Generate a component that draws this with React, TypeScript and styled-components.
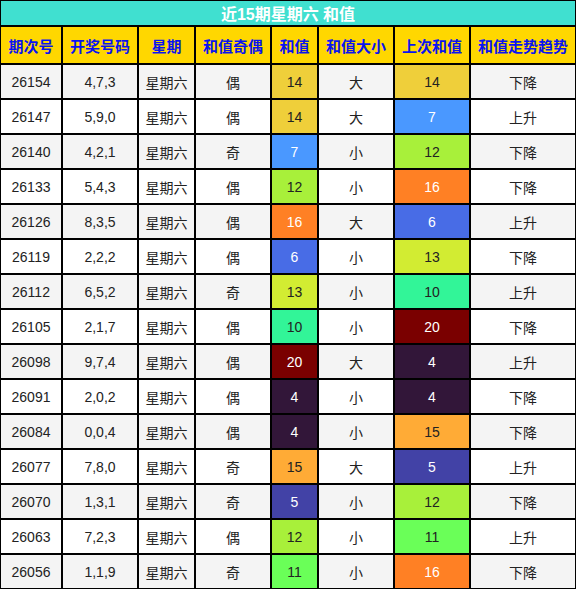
import React from 'react'
import styled, { createGlobalStyle } from 'styled-components'

const GlobalStyle = createGlobalStyle`
  body {
    margin: 0;
    background: #ffffff;
    font-family: "Liberation Sans", "Noto Sans CJK SC", sans-serif;
  }
`

const TEAL = '#40e0d0'
const GOLD = '#ffd700'

// colour for a sum value, with the text colour that sits on it
const SUM_COLORS: Record<number, [string, string]> = {
  4: ['#321639', '#ffffff'],
  5: ['#4242a6', '#ffffff'],
  6: ['#486ce6', '#ffffff'],
  7: ['#4a98ff', '#ffffff'],
  10: ['#32f598', '#222222'],
  11: ['#6aff58', '#222222'],
  12: ['#a8f03a', '#222222'],
  13: ['#d2ec32', '#222222'],
  14: ['#efcf3a', '#222222'],
  15: ['#ffab36', '#222222'],
  16: ['#ff8024', '#ffffff'],
  20: ['#7a0000', '#ffffff'],
}

const Table = styled.table`
  width: 576px;
  border-collapse: separate;
  border-spacing: 0;
  table-layout: fixed;
`

const TitleCell = styled.th`
  box-sizing: border-box;
  height: 26px;
  padding: 0;
  border: 1px solid #000;
  background: ${TEAL};
  color: #ffffff;
  font-size: 16px;
  font-weight: bold;
  text-align: center;
`

const HeadCell = styled.th`
  box-sizing: border-box;
  height: 38px;
  padding: 0;
  border: 1px solid #000;
  background: ${GOLD};
  color: #0a14f0;
  font-size: 15px;
  font-weight: bold;
  text-align: center;
`

const Row = styled.tr<{ $shade: boolean }>`
  background: ${p => (p.$shade ? '#f4f4f4' : '#ffffff')};
`

const Cell = styled.td`
  box-sizing: border-box;
  height: 35px;
  padding: 0;
  border: 1px solid #000;
  color: #222222;
  font-size: 14px;
  text-align: center;
`

const SumCell = styled(Cell)<{ $bg: string; $fg: string }>`
  background: ${p => p.$bg};
  color: ${p => p.$fg};
`

const widths = [62, 76, 57, 76, 47, 76, 76, 106]
const heads = ['期次号', '开奖号码', '星期', '和值奇偶', '和值', '和值大小', '上次和值', '和值走势趋势']

type Draw = [string, string, string, number, string, number, string]

const draws: Draw[] = [
  ['26154', '4,7,3', '偶', 14, '大', 14, '下降'],
  ['26147', '5,9,0', '偶', 14, '大', 7, '上升'],
  ['26140', '4,2,1', '奇', 7, '小', 12, '下降'],
  ['26133', '5,4,3', '偶', 12, '小', 16, '下降'],
  ['26126', '8,3,5', '偶', 16, '大', 6, '上升'],
  ['26119', '2,2,2', '偶', 6, '小', 13, '下降'],
  ['26112', '6,5,2', '奇', 13, '小', 10, '上升'],
  ['26105', '2,1,7', '偶', 10, '小', 20, '下降'],
  ['26098', '9,7,4', '偶', 20, '大', 4, '上升'],
  ['26091', '2,0,2', '偶', 4, '小', 4, '下降'],
  ['26084', '0,0,4', '偶', 4, '小', 15, '下降'],
  ['26077', '7,8,0', '奇', 15, '大', 5, '上升'],
  ['26070', '1,3,1', '奇', 5, '小', 12, '下降'],
  ['26063', '7,2,3', '偶', 12, '小', 11, '上升'],
  ['26056', '1,1,9', '奇', 11, '小', 16, '下降'],
]

const Sum = ({ value }: { value: number }) => {
  const [bg, fg] = SUM_COLORS[value]
  return <SumCell $bg={bg} $fg={fg}>{value}</SumCell>
}

const App = () => (
  <>
    <GlobalStyle />
    <Table>
      <colgroup>
        {widths.map((w, i) => <col key={i} style={{ width: w }} />)}
      </colgroup>
      <thead>
        <tr>
          <TitleCell colSpan={8}>近15期星期六 和值</TitleCell>
        </tr>
        <tr>
          {heads.map(h => <HeadCell key={h}>{h}</HeadCell>)}
        </tr>
      </thead>
      <tbody>
        {draws.map(([issue, nums, odd, sum, size, prev, trend], i) => (
          <Row key={issue} $shade={i % 2 === 0}>
            <Cell>{issue}</Cell>
            <Cell>{nums}</Cell>
            <Cell>星期六</Cell>
            <Cell>{odd}</Cell>
            <Sum value={sum} />
            <Cell>{size}</Cell>
            <Sum value={prev} />
            <Cell>{trend}</Cell>
          </Row>
        ))}
      </tbody>
    </Table>
  </>
)

export default App
